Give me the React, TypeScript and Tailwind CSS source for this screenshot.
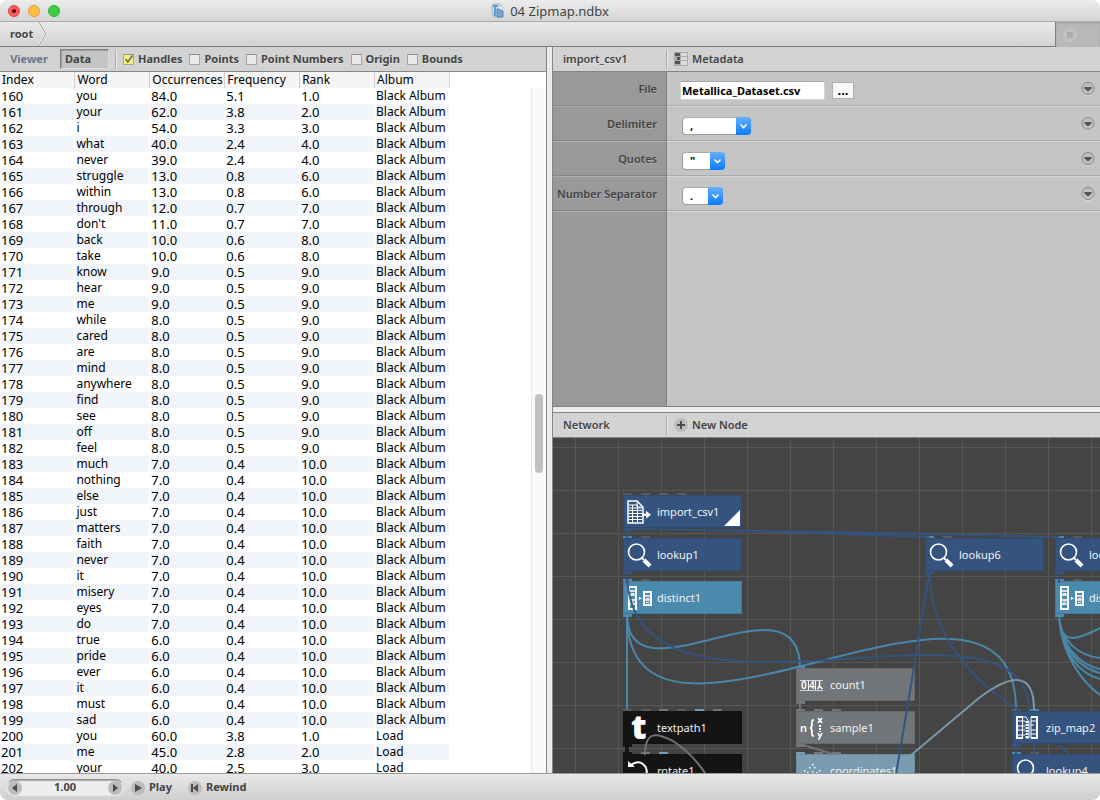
import type { ReactNode } from "react";

type Row = [number, string, string, string, string, string];

const source = `160 you 84.0 5.1 1.0|161 your 62.0 3.8 2.0|162 i 54.0 3.3 3.0|163 what 40.0 2.4 4.0|164 never 39.0 2.4 4.0|165 struggle 13.0 0.8 6.0|166 within 13.0 0.8 6.0|167 through 12.0 0.7 7.0|168 don't 11.0 0.7 7.0|169 back 10.0 0.6 8.0|170 take 10.0 0.6 8.0|171 know 9.0 0.5 9.0|172 hear 9.0 0.5 9.0|173 me 9.0 0.5 9.0|174 while 8.0 0.5 9.0|175 cared 8.0 0.5 9.0|176 are 8.0 0.5 9.0|177 mind 8.0 0.5 9.0|178 anywhere 8.0 0.5 9.0|179 find 8.0 0.5 9.0|180 see 8.0 0.5 9.0|181 off 8.0 0.5 9.0|182 feel 8.0 0.5 9.0|183 much 7.0 0.4 10.0|184 nothing 7.0 0.4 10.0|185 else 7.0 0.4 10.0|186 just 7.0 0.4 10.0|187 matters 7.0 0.4 10.0|188 faith 7.0 0.4 10.0|189 never 7.0 0.4 10.0|190 it 7.0 0.4 10.0|191 misery 7.0 0.4 10.0|192 eyes 7.0 0.4 10.0|193 do 7.0 0.4 10.0|194 true 6.0 0.4 10.0|195 pride 6.0 0.4 10.0|196 ever 6.0 0.4 10.0|197 it 6.0 0.4 10.0|198 must 6.0 0.4 10.0|199 sad 6.0 0.4 10.0|200 you 60.0 3.8 1.0|201 me 45.0 2.8 2.0|202 your 40.0 2.5 3.0`;

const rows: Row[] = source.split("|").map((line) => {
  const [i, w, o, f, r] = line.split(" ");
  return [Number(i), w, o, f, r, Number(i) < 200 ? "Black Album" : "Load"];
});

const columns = ["Index", "Word", "Occurrences", "Frequency", "Rank", "Album"];

function Check({ label, checked = false }: { label: string; checked?: boolean }) {
  return (
    <label className="flex items-center gap-1 whitespace-nowrap">
      <span className="relative block size-[11px]">
        <input
          type="checkbox"
          defaultChecked={checked}
          className="peer block size-[11px] appearance-none border border-[#a6a6a6] border-t-[#8f8f8f] bg-[#e9e9e9] checked:bg-[#f6f27e]"
        />
        <svg viewBox="0 0 11 11" className="pointer-events-none absolute inset-0 hidden size-[11px] peer-checked:block">
          <path d="M2.5 5 4.8 8 9.5 1.5" fill="none" stroke="#666" strokeWidth="1.6" />
        </svg>
      </span>
      {label}
    </label>
  );
}

function RowMenu() {
  return (
    <button type="button" aria-label="Parameter options" className="mt-[10px] mr-[5px] block size-[14px]">
      <svg viewBox="0 0 14 14" className="size-[14px]">
        <circle cx="7" cy="7.5" r="6" fill="none" stroke="#dedede" />
        <circle cx="7" cy="6.5" r="6" fill="#c0c0c0" stroke="#868686" />
        <path d="M3.4 5h7.2v1.500L7 9.4 3.4 6.5z" fill="#555" />
      </svg>
    </button>
  );
}

function Param({ label, id, children }: { label: string; id: string; children: ReactNode }) {
  return (
    <div className="flex h-[35px]">
      <label
        htmlFor={id}
        className="w-[114px] shrink-0 border-r border-b border-r-[#808080] border-b-[#adadad] pt-[9px] pr-[9px] text-right leading-4 whitespace-nowrap shadow-[inset_0_-1px_0_#858585] [text-shadow:0_1px_0_#b0b0b0]"
      >
        {label}
      </label>
      <div className="flex flex-1 items-start justify-between border-b border-[#d6d6d6] pl-[13px] shadow-[inset_0_-1px_0_#aaa]">
        {children}
        <RowMenu />
      </div>
    </div>
  );
}

function Choice({ id, value, className }: { id: string; value: string; className: string }) {
  return (
    <div className={`relative mt-[10px] ml-[2px] h-[18px] ${className}`}>
      <select
        id={id}
        defaultValue={value}
        className="block h-[18px] w-full appearance-none rounded border border-[#999] border-t-[#aaa] bg-white pl-[7px] leading-4 font-bold text-black"
      >
        <option>{value}</option>
      </select>
      <svg viewBox="0 0 15 18" className="pointer-events-none absolute top-0 right-0 h-[18px] w-[15px]">
        <defs>
          <linearGradient id={`${id}-blue`} x2="0" y2="1">
            <stop stopColor="#66b0fb" />
            <stop offset="1" stopColor="#0b7bff" />
          </linearGradient>
        </defs>
        <path d="M0 0h11a4 4 0 0 1 4 4v10a4 4 0 0 1-4 4H0z" fill={`url(#${id}-blue)`} />
        <path d="m4.5 7.5 3 3 3-3" fill="none" stroke="#fff" strokeWidth="1.6" />
      </svg>
    </div>
  );
}

const NAVY = "#34547f";
const TEAL = "#4a8aae";
const GREY = "#737679";
const BLACK = "#141414";
const STEEL = "#7a9cb0";
const PORT = "#5b5b5b";

type IconName = "csv" | "lens" | "distinct" | "text" | "rotate" | "count" | "sample" | "coords" | "zip";

function NodeIcon({ name }: { name: IconName }) {
  const line = { fill: "none", stroke: "#fff" };
  switch (name) {
    case "csv":
      return (
        <g>
          <path d="M1 1h9l6 6v16H1z" {...line} strokeWidth="1.5" />
          <path d="M2 5h9M2 8h13M2 10.5h13M2 13.5h13M2 16.5h13M2 19.5h13M5.5 5v18M10.5 5v18M10 1v6h6" {...line} />
          <path d="M15 13.5h4v-2.8l5 4-5 4V16h-4z" fill="#fff" />
        </g>
      );
    case "lens":
      return (
        <g {...line}>
          <circle cx="9.500" cy="9" r="8" strokeWidth="1.6" />
          <path d="m15 15 2 2" strokeWidth="2" />
          <path d="m17 17 6 6" strokeWidth="4" />
        </g>
      );
    case "distinct":
      return (
        <g {...line}>
          <path d="M2 1h7v22H2z" strokeWidth="2" />
          <path d="M2 5h7M2 9h7M2 14h7M2 18h7" strokeWidth="1.5" />
          <path d="M17 6h7v13h-7z" strokeWidth="2" />
          <path d="M17 10h7M17 14h7" strokeWidth="1.5" />
          <path d="M4 7.5h3M4 16h3M19 12.5h3M19 16.5h3" />
          <path d="m12 10.5 3 2-3 1.5z" fill="#fff" stroke="none" />
        </g>
      );
    case "rotate":
      return (
        <g>
          <path d="M3.5 7A9 9 0 1 1 6 20" {...line} strokeWidth="2" />
          <path d="M1 2v6h7z" fill="#fff" />
        </g>
      );
    case "count":
      return (
        <g {...line}>
          <path d="M0 7.5h23M0 17.5h23" strokeOpacity="0.7" />
          <path d="M8.500 8v9M15.500 8v9" />
          <path d="M19.500 8v5M19.500 13l-2 3M19.500 13l3 3" strokeWidth="1.5" />
        </g>
      );
    case "sample":
      return (
        <g>
          <path d="M14 4c-3 0-2 2-2 4s0 4-2 4c2 0 2 2 2 4s-1 4 2 4" {...line} strokeWidth="1.8" />
          <path d="M19 9h2v2h-2zM19 12h2v2h-2zM19 15h2v1h-2z" fill="#fff" />
          <path d="m18 2 4 5M22 2l-4 5M18 17l2 4M22 17l-3 6h-1" {...line} strokeWidth="1.6" />
        </g>
      );
    case "coords":
      return (
        <g fill="#fff">
          {[[12, 5], [9, 8], [14, 8], [4, 11], [7, 13], [12, 12], [16, 13], [19, 11], [5, 17], [8, 18], [17, 18], [12, 19]].map(([x, y]) => (
            <rect key={`${x}-${y}`} x={x} y={y} width="1.5" height="1.5" />
          ))}
        </g>
      );
    case "zip":
      return (
        <g {...line}>
          <path d="M7 1H1v21h6M15 1h6v21h-6" strokeWidth="2" />
          <path d="M6.5 1v21M15 1v21M2 5h7M2 10h7M2 14h7M2 19h7M15 5h6M15 9h3M15 14h6M15 18h6" />
          <path d="M7 1h3l3 5v16h-3" />
          <path d="M11 5v17" strokeWidth="3" strokeDasharray="2 1" />
        </g>
      );
    default:
      return null;
  }
}

interface GraphNode {
  name: string;
  x: number;
  y: number;
  color: string;
  icon: IconName;
  ports: string[];
  rendered?: boolean;
}

const nodes: GraphNode[] = [
  { name: "import_csv1", x: 70, y: 58, color: NAVY, icon: "csv", ports: [PORT, PORT, PORT, PORT], rendered: true },
  { name: "lookup1", x: 70, y: 101, color: NAVY, icon: "lens", ports: [TEAL, PORT] },
  { name: "distinct1", x: 70, y: 144, color: TEAL, icon: "distinct", ports: [TEAL, PORT] },
  { name: "textpath1", x: 70, y: 274, color: BLACK, icon: "text", ports: [PORT, PORT, GREY, PORT, STEEL, GREY] },
  { name: "rotate1", x: 70, y: 317, color: BLACK, icon: "rotate", ports: [BLACK, GREY, STEEL] },
  { name: "count1", x: 243, y: 231, color: GREY, icon: "count", ports: [TEAL] },
  { name: "sample1", x: 243, y: 274, color: GREY, icon: "sample", ports: [GREY, GREY, GREY] },
  { name: "coordinates1", x: 243, y: 317, color: STEEL, icon: "coords", ports: [STEEL, GREY, GREY] },
  { name: "lookup6", x: 372, y: 101, color: NAVY, icon: "lens", ports: [TEAL, PORT] },
  { name: "lookup2", x: 502, y: 101, color: NAVY, icon: "lens", ports: [TEAL, PORT] },
  { name: "distinct2", x: 502, y: 144, color: TEAL, icon: "distinct", ports: [TEAL, PORT] },
  { name: "zip_map2", x: 459, y: 274, color: NAVY, icon: "zip", ports: [PORT, TEAL] },
  { name: "lookup4", x: 459, y: 317, color: NAVY, icon: "lens", ports: [TEAL, PORT] },
];

function NodeBox({ node }: { node: GraphNode }) {
  return (
    <div
      className="absolute flex h-[33px] w-[119px] items-center border border-black/10"
      style={{ left: node.x, top: node.y - 1, backgroundColor: node.color }}
    >
      <svg viewBox="0 0 26 24" className="ml-[3px] h-6 w-[26px] shrink-0 overflow-visible">
        <NodeIcon name={node.icon} />
        {node.icon === "text" && (
          <text x="4" y="23" fill="#fff" fontSize="34" fontWeight="800" fontFamily="Open Sans">t</text>
        )}
        {node.icon === "count" && (
          <text y="16" fill="#fff" fontSize="10" fontFamily="Noto Sans">
            <tspan x="1">0</tspan>
            <tspan x="9">4</tspan>
          </text>
        )}
        {node.icon === "sample" && (
          <text x="0" y="16" fill="#fff" fontSize="11" fontWeight="600" fontFamily="Noto Sans">n</text>
        )}
      </svg>
      <span className="ml-1 text-[11px] leading-4 font-normal whitespace-nowrap text-[#f2f2f2]">{node.name}</span>
      <svg className="pointer-events-none absolute -top-[3px] -left-px h-[38px] w-[119px]" viewBox="0 0 119 38">
        {node.ports.map((color, i) => (
          <rect key={i} x={i * 18} y="0" width="9" height="2" fill={color} />
        ))}
        <rect x="0" y="35" width="9" height="3" fill={node.color} />
        {node.rendered && <path d="M117 17v16h-16z" fill="#fff" />}
      </svg>
    </div>
  );
}

const wires: [string, string, number][] = [
  [NAVY, "M74 90V100M74 133V145M506 133V145", 2],
  [NAVY, "M74 91Q240 93 376 99M74 91Q300 94 506 99", 2],
  [TEAL, "M74 176V271", 2],
  [TEAL, "M74 176C74 270 247 130 247 230", 2],
  [TEAL, "M74 176C74 370 463 75 463 272", 2],
  [NAVY, "M74 134C74 322 476 134 476 273", 2],
  [NAVY, "M376 134C366 200 354 272 343 336", 2],
  [NAVY, "M376 134C378 190 410 237 467 273", 2],
  [STEEL, "M357 318L426 260C455 238 481 230 481 272", 2],
  [GREY, "M247 261V273M247 306L280 316", 2],
  [BLACK, "M74 306V317", 4],
  [GREY, "M92 317C92 292 104 295 120 303Q140 316 154 338", 2],
  [NAVY, "M463 306V316M481 306V316M505 307L526 325", 2],
  [TEAL, "M506 176C507 208 522 203 547 190M506 176C507 205 528 218 547 220M506 176C507 210 530 228 547 231M506 176C507 214 530 231 547 235M506 176C507 216 528 236 547 241M506 176C507 218 532 246 547 257", 2],
];

function Network() {
  return (
    <div className="relative min-h-0 flex-1 overflow-hidden bg-[#444]">
      <svg className="absolute inset-0 size-full">
        <defs>
          <pattern id="grid" x="22" y="9" width="43" height="43" patternUnits="userSpaceOnUse">
            <path d="M.5 0V43M0 .5H43" stroke="#575757" fill="none" />
          </pattern>
        </defs>
        <rect width="100%" height="100%" fill="url(#grid)" />
      </svg>
      {nodes.map((node) => (
        <NodeBox key={node.name} node={node} />
      ))}
      <svg className="pointer-events-none absolute inset-0 size-full">
        {wires.map(([color, d, width]) => (
          <path key={d} d={d} stroke={color} strokeWidth={width} fill="none" strokeOpacity="0.95" />
        ))}
      </svg>
    </div>
  );
}

function RoundIcon({ d }: { d: string }) {
  return (
    <svg viewBox="0 0 14 14" className="size-[14px]">
      <circle cx="7" cy="7" r="7" fill="#bcbcbc" />
      <path d={d} fill="#4b4b4b" />
    </svg>
  );
}

export default function App() {
  return (
    <div className="flex h-screen flex-col overflow-hidden rounded-lg bg-[#ececec] font-['Noto_Sans',sans-serif] text-[11px] font-semibold text-[#434343]">
      <header className="relative flex h-[22px] shrink-0 items-center justify-center gap-[5px] border-b border-[#aaa] bg-linear-to-b from-[#ececec] to-[#d5d5d5]">
        <div className="absolute left-2 flex gap-2">
          <button type="button" aria-label="Close" className="flex size-3 items-center justify-center rounded-full border border-[#de4643] bg-[#fb5b5a]">
            <span className="size-1 rounded-full bg-[#4d0000]" />
          </button>
          <button type="button" aria-label="Minimize" className="size-3 rounded-full border border-[#dfa032] bg-[#fdbe41]" />
          <button type="button" aria-label="Zoom" className="size-3 rounded-full border border-[#2bb032] bg-[#3ccc46]" />
        </div>
        <svg viewBox="0 0 14 16" className="h-4 w-[14px]">
          <path d="M2 1h7l2 3v10H3L1 10V3z" fill="#c8dced" stroke="#93b6d3" />
          <path d="M2 2h5v2H5v9H3V4H2z" fill="#6999c8" />
          <path d="M6 6h3v2h3v6H6z" fill="#77a5d4" stroke="#5385b8" />
          <path d="M8 4h3v2H8z" fill="#e7f2fa" />
        </svg>
        <h1 className="text-[13px] leading-5 font-normal">04 Zipmap.ndbx</h1>
      </header>

      <nav className="flex h-[25px] shrink-0">
        <div className="flex min-w-0 flex-1 items-center border-r border-b border-[#7f7f7f] bg-linear-to-b from-[#e9e9e9] to-[#d2d2d2]">
          <a href="#root" className="pl-[10px] font-bold [text-shadow:0_1px_0_#f5f5f5]">root</a>
          <svg viewBox="0 0 10 24" className="ml-[5px] h-6 w-[10px]">
            <path d="m1 0 7 12-7 12" fill="none" stroke="#f5f5f5" strokeWidth="2" />
            <path d="m1 0 7 12-7 12" fill="none" stroke="#999" />
          </svg>
        </div>
        <div className="w-11 bg-[#b8b8b8] pt-1 pl-[7px] shadow-[inset_0_2px_2px_#a8a8a8]">
          <button type="button" aria-label="Stop" className="mt-[2px] flex size-[14px] items-center justify-center rounded-full bg-[#c1c1c1]">
            <span className="size-[6px] bg-[#acacac]" />
          </button>
        </div>
      </nav>

      <main className="flex min-h-0 flex-1">
        <section className="flex w-[calc(50%-3px)] flex-col border-r border-[#858585] bg-white">
          <div className="flex h-[25px] shrink-0 items-center border-b border-[#858585] bg-[#d2d2d2] font-bold [text-shadow:0_1px_0_#e4e4e4]">
            <button type="button" className="w-[60px] pr-[2px] text-center text-[#68768b]">Viewer</button>
            <button type="button" className="h-5 w-[49px] border border-[#dcdcdc] border-t-[#808080] border-l-[#808080] bg-[#c5c5c5] pl-1 text-left shadow-[inset_1px_1px_1px_#9c9c9c]">
              Data
            </button>
            <div className="ml-[6px] h-[19px] border-l border-[#aaa] shadow-[1px_0_0_#e8e8e8]" />
            <div className="ml-[7px] flex items-center gap-[7px]">
              <Check label="Handles" checked />
              <Check label="Points" />
              <Check label="Point Numbers" />
              <Check label="Origin" />
              <Check label="Bounds" />
            </div>
          </div>
          <div className="flex min-h-0 flex-1 justify-between overflow-hidden">
            <table className="h-fit w-[450px] table-fixed border-collapse font-normal text-black">
              <thead>
                <tr className="h-4">
                  {columns.map((name) => (
                    <th key={name} className="border-r border-[#d0d0d0] bg-[#f5f5f5] p-0 pl-[2px] text-left text-[12px] leading-4 font-normal whitespace-nowrap">
                      {name}
                    </th>
                  ))}
                </tr>
              </thead>
              <tbody>
                {rows.map((row) => (
                  <tr key={row[0]} className="h-4 even:bg-[#f1f5fa]">
                    {row.map((cell, i) => (
                      <td
                        key={i}
                        className={`border-r border-white p-0 pl-px leading-4 whitespace-nowrap ${i === 1 || i === 5 ? "text-[12px]" : "text-[13px]"}`}
                      >
                        {cell}
                      </td>
                    ))}
                  </tr>
                ))}
              </tbody>
            </table>
            <div className="mt-4 w-[15px] border-l border-[#e8e8e8] bg-[#fafafa]">
              <div className="mt-[306px] ml-[3px] h-[79px] w-2 rounded-full bg-[#c1c1c1]" />
            </div>
          </div>
        </section>

        <div className="w-[5px] shrink-0 cursor-col-resize bg-[#ececec]" />

        <div className="flex min-w-0 flex-1 flex-col border-l border-[#858585]">
          <section className="flex h-[calc(50%-3px)] shrink-0 flex-col border-b border-[#858585] bg-[#c4c4c4]">
            <div className="flex h-[25px] shrink-0 items-center border-b border-[#858585] bg-[#d2d2d2] [text-shadow:0_1px_0_#e8e8e8]">
              <h2 className="w-[113px] pl-[10px]">import_csv1</h2>
              <div className="h-[19px] border-l border-[#aaa] shadow-[1px_0_0_#e8e8e8]" />
              <button type="button" className="ml-[7px] flex items-center gap-1">
                <svg viewBox="0 0 14 14" className="size-[14px]">
                  <path d="M0 0h14v14H0z" fill="#aaa" />
                  <path d="M1 1h5v3H1zM3 5h3v3H3zM1 9h5v3H1z" fill="#555" />
                  <path d="M7 1h6v3H7zM7 5h6v3H7zM7 9h6v4H7z" fill="#ddd" />
                </svg>
                Metadata
              </button>
            </div>
            <div className="flex flex-1 flex-col bg-linear-to-r from-[#999] from-[113px] to-[#c4c4c4] to-[113px]">
              <Param label="File" id="file">
                <div className="mt-[9px] flex items-center gap-[7px]">
                  <input
                    id="file"
                    type="text"
                    defaultValue="Metallica_Dataset.csv"
                    className="h-[19px] w-[145px] border border-[#d4d4d4] border-t-[#a9a9a9] bg-white pl-px font-bold text-black"
                  />
                  <button type="button" aria-label="Choose file" className="flex h-[17px] w-[22px] items-center justify-center border border-[#b0b0b0] bg-[#f8f8f8] text-[13px] font-bold text-black">
                    ...
                  </button>
                </div>
              </Param>
              <Param label="Delimiter" id="delimiter">
                <Choice id="delimiter" value="," className="w-[69px]" />
              </Param>
              <Param label="Quotes" id="quotes">
                <Choice id="quotes" value={'"'} className="w-[43px]" />
              </Param>
              <Param label="Number Separator" id="separator">
                <Choice id="separator" value="." className="w-[41px]" />
              </Param>
              <div className="w-[114px] flex-1 border-r border-[#808080]" />
            </div>
          </section>

          <div className="h-[5px] shrink-0 cursor-row-resize bg-[#ececec]" />

          <section className="flex min-h-0 flex-1 flex-col border-t border-[#858585]">
            <div className="flex h-[25px] shrink-0 items-center border-b border-[#858585] bg-[#d2d2d2] [text-shadow:0_1px_0_#e8e8e8]">
              <h2 className="w-[113px] pl-[10px]">Network</h2>
              <div className="h-[19px] border-l border-[#aaa] shadow-[1px_0_0_#e8e8e8]" />
              <button type="button" className="ml-[7px] flex items-center gap-1">
                <RoundIcon d="M6 3h2v3h3v2H8v3H6V8H3V6h3z" />
                New Node
              </button>
            </div>
            <Network />
          </section>
        </div>
      </main>

      <footer className="flex h-[27px] shrink-0 items-center border-t border-[#999] bg-linear-to-b from-[#e8e8e8] to-[#cfcfcf] pt-px pl-[6px] font-bold [text-shadow:0_1px_0_#f0f0f0]">
        <div className="flex h-[17px] w-[118px] items-center justify-between rounded-full border border-[#e5e5e5] border-t-[#8e8e8e] bg-[#eee] px-px shadow-[inset_0_1px_1px_#aaa]">
          <button type="button" aria-label="Previous frame"><RoundIcon d="M4 7 9 3v8z" /></button>
          <input aria-label="Frame" type="text" defaultValue="1.00" className="w-[70px] bg-transparent text-center" />
          <button type="button" aria-label="Next frame"><RoundIcon d="M10 7 5 3v8z" /></button>
        </div>
        <button type="button" className="ml-[7px] flex items-center gap-1">
          <RoundIcon d="M11 7 4 3v8z" />
          Play
        </button>
        <button type="button" className="ml-4 flex items-center gap-1">
          <RoundIcon d="M3 3h2v8H3zM10 3 5 7l5 4z" />
          Rewind
        </button>
      </footer>
    </div>
  );
}
